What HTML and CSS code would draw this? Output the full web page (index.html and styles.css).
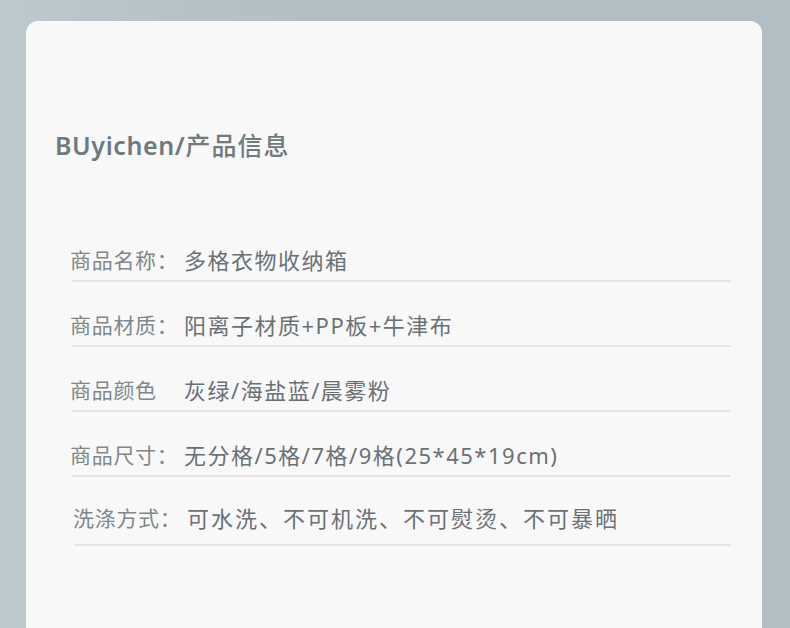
FILE: index.html
```html
<!DOCTYPE html>
<html>
	<head>
		<meta charset="utf-8">
		<title>产品信息</title>
		<link rel="stylesheet" href="styles.css">
	</head>
	<body>
		<div class="card">
			<h1 class="title"><span class="brand">BUyichen/</span>产品信息</h1>

			<div class="info">
				<div class="row">
					<span class="label">商品名称：</span>
					<span class="value">多格衣物收纳箱</span>
				</div>
				<div class="row">
					<span class="label">商品材质：</span>
					<span class="value">阳离子材质+PP板+牛津布</span>
				</div>
				<div class="row">
					<span class="label">商品颜色</span>
					<span class="value">灰绿/海盐蓝/晨雾粉</span>
				</div>
				<div class="row">
					<span class="label">商品尺寸：</span>
					<span class="value">无分格/5格/7格/9格(25*45*19cm)</span>
				</div>
				<div class="row row-last">
					<span class="label">洗涤方式：</span>
					<span class="value">可水洗、不可机洗、不可熨烫、不可暴晒</span>
				</div>
			</div>
		</div>
	</body>
</html>
```

FILE: styles.css
```css
*
	{
		box-sizing: border-box;
	}
body
	{
		margin: 0;
		height: 628px;
		overflow: hidden;
		background: linear-gradient(90deg, #bdc9ce 0%, #b3c0c6 30%, #b1bec4 100%);
		font-family: "Noto Sans", "Noto Sans CJK SC", sans-serif;
	}
.card
	{
		margin: 21px 0 0 26px;
		width: 736px;
		height: 640px;
		background-color: #f8f8f8;
		border-radius: 12px;
		padding: 109px 0 0 29px;
	}
.title
	{
		margin: 0;
		font-size: 25px;
		line-height: 30px;
		font-weight: 500;
		color: #6f797e;
		letter-spacing: 1px;
	}
.brand
	{
		font-weight: 600;
		letter-spacing: 0.6px;
	}
.info
	{
		margin: 57px 0 0 17px;
		width: 659px;
	}
.row
	{
		display: flex;
		align-items: flex-end;
		height: 65px;
		padding-bottom: 8px;
		border-bottom: 2px solid #e5e5e6;
		font-size: 21px;
		line-height: 24px;
	}
.row-last
	{
		height: 69px;
		padding-bottom: 14px;
		margin-left: 3px;
	}
.label
	{
		width: 114px;
		margin-left: -2px;
		color: #80878b;
		letter-spacing: 0.7px;
		white-space: nowrap;
	}
.value
	{
		color: #6a7176;
		font-size: 22px;
		letter-spacing: 1.5px;
		white-space: nowrap;
	}
.row-last .value
	{
		letter-spacing: 2px;
	}
```
